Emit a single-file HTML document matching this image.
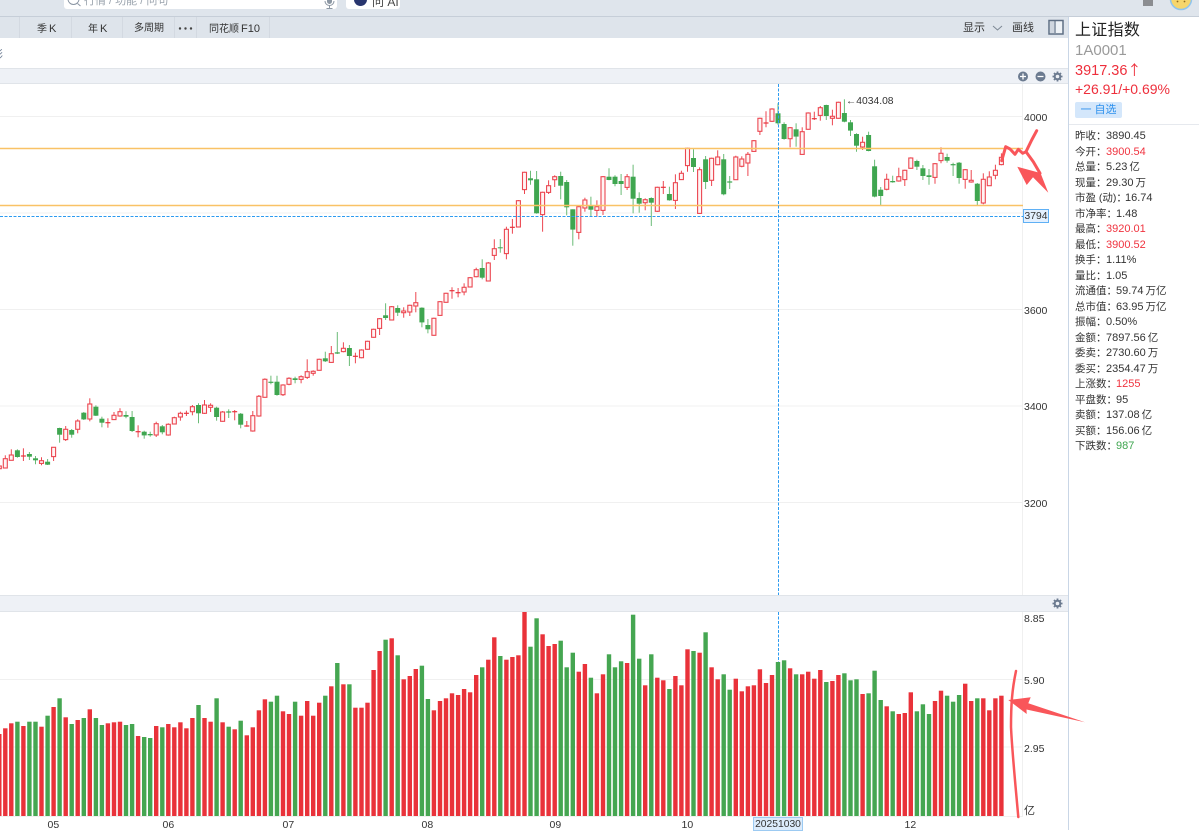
<!DOCTYPE html>
<html lang="zh">
<head>
<meta charset="utf-8">
<title>上证指数</title>
<style>
html,body{margin:0;padding:0;background:#fff}
body{width:1199px;height:830px;position:relative;overflow:hidden;font-family:"Liberation Sans","Noto Sans CJK SC",sans-serif;color:#333;font-size:10.5px;filter:blur(.3px)}
.a{position:absolute}
.t{position:absolute;white-space:nowrap;line-height:14px;height:14px}
.tb{font-size:10px;color:#333}
.tb i{font-style:normal;margin-left:2px;font-size:11px}
.s{position:absolute;left:1075px;white-space:nowrap;font-size:10.5px;line-height:14px;color:#333}
.s b{font-weight:normal;font-size:11px;position:absolute;top:0}
.s b i{font-style:normal;font-size:10.5px;margin-left:2px}
.r{color:#f0333f}
.g{color:#3fa650}
.v{position:absolute;background:#d3d9e1;width:1px;top:17px;height:21px}
svg{position:absolute;left:0;top:0}
</style>
</head>
<body>
<div class="a" style="left:0;top:0;width:1199px;height:16px;background:#dfe5ec"></div>
<div class="a" style="left:0;top:16px;width:1199px;height:1px;background:#c6ced8"></div>
<div class="a" style="left:0;top:17px;width:1068px;height:21px;background:#dee4eb"></div>

<div class="a" style="left:64px;top:-6px;width:273px;height:15px;background:#fff;border-radius:3px"></div>
<div class="t" style="left:84px;top:-6px;font-size:11px;color:#9aa3ad">行情 / 功能 / 问句</div>
<div class="a" style="left:346px;top:-6px;width:54px;height:15px;background:#fff;border-radius:3px"></div>
<div class="a" style="left:354px;top:-7px;width:13px;height:13px;background:#28356e;border-radius:50%"></div>
<div class="t" style="left:372px;top:-5px;font-size:12px;color:#444">问 AI</div>
<div class="a" style="left:1143px;top:0;width:10px;height:6px;background:#8b8d91"></div>

<div class="v" style="left:19px"></div><div class="v" style="left:71px"></div><div class="v" style="left:122px"></div><div class="v" style="left:174px"></div><div class="v" style="left:196px"></div><div class="v" style="left:269px"></div>
<div class="t tb" style="left:37px;top:22px">季<i>K</i></div>
<div class="t tb" style="left:88px;top:22px">年<i>K</i></div>
<div class="t tb" style="left:134px;top:22px">多周期</div>
<div class="t tb" style="left:209px;top:22px">同花顺<i>F10</i></div>
<div class="t" style="left:963px;top:21px;font-size:11px">显示</div>
<div class="t" style="left:1012px;top:21px;font-size:11px">画线</div>
<div class="t" style="left:-8px;top:48px;color:#6f7f95;font-size:11px">彩</div>

<div class="a" style="left:0;top:68px;width:1068px;height:16px;background:#eef1f6;border-top:1px solid #e0e4e9;border-bottom:1px solid #e0e4e9;box-sizing:border-box"></div>
<div class="a" style="left:0;top:595px;width:1068px;height:17px;background:#eef1f6;border-top:1px solid #e0e4e9;border-bottom:1px solid #e0e4e9;box-sizing:border-box"></div>
<div class="a" style="left:1068px;top:17px;width:1px;height:813px;background:#c9d6e6"></div>
<div class="a" style="left:1069px;top:124px;width:130px;height:1px;background:#e6e9ee"></div>

<svg id="ch" width="1199" height="830" viewBox="0 0 1199 830">
  <g stroke="#f0f0f0" stroke-width="1">
    <path d="M1022.5 84V595M1022.5 612V816"/>
    <path d="M0 116.5H1023M0 213H1023M0 309.5H1023M0 406H1023M0 502.5H1023M0 679.5H1023M0 747H1023M0 816.5H1023"/>
  </g>
  <g id="cn"></g>
  <path d="M0 148.5H1023M0 205.5H1023" stroke="#f9c266" stroke-width="1.4" fill="none"/>
  <path d="M0 216.5H1023M778.5 84V595M778.5 612V662" stroke="#2d9bf0" stroke-width="1" stroke-dasharray="3 1.5" fill="none"/>
  <g id="vb"></g>

  <!-- tab dots -->
  <g fill="#444"><circle cx="180" cy="28.5" r="1.2"/><circle cx="185.5" cy="28.5" r="1.2"/><circle cx="191" cy="28.5" r="1.2"/></g>
  <path d="M993 26L997.5 30L1002 26" stroke="#7d8894" fill="none" stroke-width="1"/>
  <rect x="1049" y="20.500" width="14" height="13.500" fill="#eef2f6" stroke="#5f6f84" stroke-width="1.5"/>
  <path d="M1055 21v12" stroke="#5f6f84" stroke-width="1.200"/>
  <rect x="1050" y="21.500" width="4.500" height="11.500" fill="#cfd6df"/>
  <!-- search + mic -->
  <circle cx="73.500" cy="-1" r="5.500" fill="none" stroke="#8a95a3" stroke-width="1"/>
  <path d="M77.500 3.500L80.500 6" stroke="#8a95a3" fill="none" stroke-width="1"/>
  <rect x="327" y="-3" width="5" height="7" rx="2.5" fill="#8c97a3"/>
  <path d="M325 1a4.500 4.500 0 0 0 9 0M329.500 6v2M326.500 8.500h6" stroke="#8c97a3" fill="none" stroke-width="1"/>
  <!-- avatar -->
  <ellipse cx="1181" cy="-1" rx="10.500" ry="10.500" fill="#f6d66c" stroke="#8fc4ee" stroke-width="1.500"/>
  <circle cx="1177.500" cy="1.500" r=".9" fill="#8c6a1f"/><circle cx="1184.500" cy="1.500" r=".9" fill="#8c6a1f"/>

  <!-- panel icons -->
  <g fill="#6c7b90">
    <circle cx="1023" cy="76.500" r="5"/><circle cx="1040.500" cy="76.500" r="5"/>
  </g>
  <path d="M1020 76.500h6M1023 73.500v6M1037.500 76.500h6" stroke="#fff" stroke-width="1.300"/>
  <g fill="none" stroke="#6c7b90">
    <circle cx="1057.500" cy="76.500" r="2.800" stroke-width="2"/>
    <path d="M1057.500 71.500v1.800M1057.500 79.700v1.800M1052.500 76.500h1.800M1060.700 76.500h1.800M1054 73l1.200 1.200M1059.800 78.800l1.200 1.200M1054 80l1.200-1.200M1059.800 74.200l1.200-1.200" stroke-width="1.800"/>
    <circle cx="1057.500" cy="603.500" r="2.800" stroke-width="2"/>
    <path d="M1057.500 598.500v1.800M1057.500 606.700v1.800M1052.500 603.500h1.800M1060.700 603.500h1.800M1054 600l1.200 1.200M1059.800 605.800l1.200 1.200M1054 607l1.200-1.200M1059.800 601.200l1.200-1.200" stroke-width="1.800"/>
  </g>

  <!-- hand annotations -->
  <g fill="none" stroke="#f9565a" stroke-linecap="round" stroke-linejoin="round">
    <path d="M1001.700 160.700L1005.700 146.700L1010 149L1015 154.300L1018.300 149.300L1022.700 153.300L1026 151.700L1031.700 140L1036.700 130.700" stroke-width="3"/>
    <path d="M1026 151.700L1033.300 161.700L1040 173.300" stroke-width="3"/>
    <path d="M1016 671C1012 690 1011 705 1011 727C1012 750 1015 780 1018.300 817" stroke-width="2.500"/>
  </g>
  <path d="M1017.300 166.700L1036.700 172L1040.500 173L1048.300 192.700L1033 177.300L1026.700 185Z" fill="#f9565a"/>
  <path d="M1008.300 700L1030.700 697.300L1028.300 703.300L1085 722.300L1026.500 709.500L1026.700 714Z" fill="#f9565a"/>
</svg>

<div class="t" style="left:846px;top:93.500px;font-size:10.3px;transform:translateY(1px)">←4034.08</div>
<div class="t" style="left:1024px;top:111px">4000</div>
<div class="t" style="left:1024px;top:304px">3600</div>
<div class="t" style="left:1024px;top:400px">3400</div>
<div class="t" style="left:1024px;top:497px">3200</div>
<div class="a" style="left:1023px;top:209px;width:26px;height:14px;background:#e3f0ff;border:1px solid #5fb0f5;box-sizing:border-box;line-height:13px;text-align:center;font-size:10.3px">3794</div>

<div class="t" style="left:1024px;top:612px">8.85</div>
<div class="t" style="left:1024px;top:674px">5.90</div>
<div class="t" style="left:1024px;top:742px">2.95</div>
<div class="t" style="left:1024px;top:804px;font-size:11px">亿</div>

<div class="t" style="left:47.500px;top:817.500px">05</div>
<div class="t" style="left:162.500px;top:817.500px">06</div>
<div class="t" style="left:282.500px;top:817.500px">07</div>
<div class="t" style="left:421.500px;top:817.500px">08</div>
<div class="t" style="left:549.500px;top:817.500px">09</div>
<div class="t" style="left:681.500px;top:817.500px">10</div>
<div class="t" style="left:904.500px;top:817.500px">12</div>
<div class="a" style="left:753px;top:817px;width:50px;height:14px;background:#dcebfb;border:1px solid #9ccaf2;box-sizing:border-box;line-height:13px;text-align:center;font-size:10.3px">20251030</div>

<div class="t" style="left:1075px;top:21px;height:20px;line-height:20px;font-size:16px;letter-spacing:.3px;color:#222">上证指数</div>
<div class="t" style="left:1075px;top:42px;height:18px;line-height:18px;font-size:15px;color:#9a9a9a">1A0001</div>
<div class="t" style="left:1075px;top:61px;height:18px;line-height:18px;font-size:14.500px;color:#ee2f3c">3917.36<span style="font-family:'Noto Sans CJK SC',sans-serif;font-size:14px">↑</span></div>
<div class="t" style="left:1075px;top:80px;height:18px;line-height:18px;font-size:14px;color:#ee2f3c">+26.91/+0.69%</div>
<div class="a" style="left:1075px;top:102px;width:47px;height:16px;background:#d4e7fb;border-radius:2px;color:#2f92ee;font-size:11px;line-height:16px;text-align:center">一 自选</div>

<div class="s" style="top:129px">昨收：<b style="left:31px">3890.45</b></div>
<div class="s" style="top:144.500px">今开：<b class="r" style="left:31px">3900.54</b></div>
<div class="s" style="top:160px">总量：<b style="left:31px">5.23<i>亿</i></b></div>
<div class="s" style="top:175.500px">现量：<b style="left:31px">29.30<i>万</i></b></div>
<div class="s" style="top:191px">市盈 (动)：<b style="left:50px">16.74</b></div>
<div class="s" style="top:206.500px">市净率：<b style="left:41px">1.48</b></div>
<div class="s" style="top:222px">最高：<b class="r" style="left:31px">3920.01</b></div>
<div class="s" style="top:237.500px">最低：<b class="r" style="left:31px">3900.52</b></div>
<div class="s" style="top:253px">换手：<b style="left:31px">1.11%</b></div>
<div class="s" style="top:268.500px">量比：<b style="left:31px">1.05</b></div>
<div class="s" style="top:284px">流通值：<b style="left:41px">59.74<i>万亿</i></b></div>
<div class="s" style="top:299.500px">总市值：<b style="left:41px">63.95<i>万亿</i></b></div>
<div class="s" style="top:315px">振幅：<b style="left:31px">0.50%</b></div>
<div class="s" style="top:330.500px">金额：<b style="left:31px">7897.56<i>亿</i></b></div>
<div class="s" style="top:346px">委卖：<b style="left:31px">2730.60<i>万</i></b></div>
<div class="s" style="top:361.500px">委买：<b style="left:31px">2354.47<i>万</i></b></div>
<div class="s" style="top:377px">上涨数：<b class="r" style="left:41px">1255</b></div>
<div class="s" style="top:392.500px">平盘数：<b style="left:41px">95</b></div>
<div class="s" style="top:408px">卖额：<b style="left:31px">137.08<i>亿</i></b></div>
<div class="s" style="top:423.500px">买额：<b style="left:31px">156.06<i>亿</i></b></div>
<div class="s" style="top:439px">下跌数：<b class="g" style="left:41px">987</b></div>

<script>
(function(){
var G=[2,4,5,7,9,11,13,15,16,20,21,23,24,26,32,35,37,39,44,45,48,53,55,57,63,65,69,70,79,82,87,88,92,93,94,97,100,101,102,104,105,107,110,114,116,119,120,128,129,131,136,139,140,141,143,144,145,147,151,152,153,156,157,158,161];
var isG={};G.forEach(function(i){isG[i]=1});
var V=[432,415,400,395,408,395,395,410,377,351,325,382,402,390,384,358,384,405,400,397,395,405,402,438,441,444,408,412,402,412,397,415,384,345,384,395,325,397,410,418,392,436,412,361,328,335,317,364,372,335,377,333,377,338,317,289,219,283,283,
353,353,338,240,183,149,145,196,268,258,237,227,327,361,333,325,310,315,297,307,255,232,209,142,198,209,201,196,66,170,85,133,168,162,152,232,188,245,222,263,310,253,193,232,214,219,74,206,286,193,263,271,297,258,286,178,183,188,
127,232,268,253,299,266,304,289,286,238,279,255,216,211,235,253,253,245,266,240,276,273,255,250,271,268,312,310,242,330,349,364,372,369,307,364,343,372,333,302,317,335,315,281,333,325,325,361,325,317];
var A=[[258,266,258,266],[236,264,226,264],[225,241,208,241],[211,231,208,233],[228,228,205,243],[222,230,216,240],[235,241,228,253],[242,250,232,256],[245,254,237,255],[202,230,201,243],[144,164,143,188],[148,179,138,183],[150,164,147,173],[123,148,118,160],[98,118,96,120],[72,117,55,124],[80,107,76,108],[116,128,110,142],[128,128,115,143],[106,119,96,119],[95,108,85,110],[105,110,94,115],[111,153,93,156],[155,155,136,172],[155,166,152,176],[162,166,155,170],[131,165,125,171],[139,157,135,163],[133,165,130,167],[113,132,110,133],[100,111,95,122],[100,100,92,108],[80,95,75,106],[75,100,70,130],[75,100,60,102],[76,82,70,96],[83,111,80,122],[96,124,93,125],[96,96,88,114],[95,95,90,121],[101,134,99,145],[138,138,123,140],[107,153,93,155],[49,108,45,110]];
var B=[[448,502,445,503],[457,457,437,463],[455,495,437,497],[465,494,463,498],[445,463,442,466],[445,450,440,460],[440,448,436,460],[425,442,388,447],[424,430,421,437],[388,421,386,422],[385,394,365,396],[371,397,348,398],[367,371,306,372],[355,365,337,367],[354,378,345,408],[379,379,368,400],[360,383,358,385],[334,358,332,359],[298,322,296,323],[266,295,264,315],[256,264,220,270],[230,270,228,271],[234,248,226,258],[243,248,232,263],[226,246,224,258],[218,228,186,247],[233,277,232,292],[285,298,267,310],[265,316,263,317],[215,256,213,257],[190,217,188,218],[182,182,172,206],[188,188,174,202],[172,186,160,196],[143,171,141,172],[119,140,113,142],[114,143,88,148],[99,153,96,154],[56,76,28,90],[52,55,27,68]];
var C=[[418,491,410,508],[412,412,387,431],[332,411,330,412],[247,299,245,312],[265,271,242,284],[268,370,243,371],[307,374,305,425],[287,307,271,312],[260,269,256,291],[258,287,245,328],[276,352,270,376],[358,419,358,467],[350,427,347,448],[330,354,323,365],[347,359,320,381],[350,361,331,380],[260,361,258,375],[260,270,235,271],[260,282,256,289],[273,282,252,315],[260,292,252,300],[260,326,224,370],[324,341,307,368],[329,338,325,361],[324,338,322,408],[292,364,290,366],[292,292,273,312],[312,331,290,332],[278,331,253,357],[250,269,242,270],[175,227,173,245],[204,231,178,246],[239,370,232,371],[208,276,198,297],[205,271,203,288],[201,224,181,226],[208,313,192,316],[276,276,258,297],[201,269,197,270],[207,229,199,232],[193,219,186,258],[152,184,150,185],[85,124,83,135],[99,99,64,112],[57,94,55,96],
[70,100,40,104],[102,147,97,149],[113,146,111,172],[118,140,100,170],[125,193,112,194],[69,118,67,119],[86,86,65,90],[53,76,48,92],[45,78,44,90],[79,85,59,106],[37,85,35,86],[69,95,28,97],[97,122,90,138],[132,167,130,185],[157,171,140,180],[135,183,125,184],[229,320,209,322],[299,318,291,345],[268,298,251,301],[273,277,257,278],[260,273,233,275],[241,269,239,288],[204,235,202,236],[213,230,209,240],[235,258,225,270],[256,261,237,284],[221,262,219,281],[190,212,172,220],[201,212,191,218],[224,224,218,258],[218,264,216,281],[239,268,237,296],[271,276,240,278],[281,333,279,345],[268,339,250,343],[261,287,244,288],[241,256,224,268],[202,224,190,226]];
function xi(i){return 5.3+6.037*i}
function f(n){return n.toFixed(1)}
var cs='',i,d,y0,x,t,b,h,l,g;
var all=[];
A.forEach(function(d,k){all.push([k-1,380,d])});
B.forEach(function(d,k){all.push([k+43,230,d])});
C.forEach(function(d,k){all.push([k+83,90,d])});
all.forEach(function(e){
 i=e[0];y0=e[1];d=e[2];x=xi(i);g=isG[i];
 t=y0+d[0]/3;b=y0+d[1]/3;h=y0+d[2]/3;l=y0+d[3]/3;
 if(g){
  cs+='<path d="M'+f(x)+' '+f(h)+'V'+f(l)+'" stroke="#6abb76" stroke-width="1"/>';
  if(b-t<1){cs+='<path d="M'+f(x-2.5)+' '+f(t)+'H'+f(x+2.5)+'" stroke="#3fa650" stroke-width="1.2"/>';}
  else cs+='<rect x="'+f(x-2.5)+'" y="'+f(t)+'" width="5" height="'+f(b-t)+'" fill="#3fa650"/>';
 }else{
  cs+='<path d="M'+f(x)+' '+f(h)+'V'+f(l)+'" stroke="#ec4650" stroke-width="1"/>';
  if(b-t<1){cs+='<path d="M'+f(x-2.5)+' '+f(t)+'H'+f(x+2.5)+'" stroke="#e8323c" stroke-width="1.2"/>';}
  else cs+='<rect x="'+f(x-2)+'" y="'+f(t)+'" width="4" height="'+f(b-t)+'" fill="#fff4f4" stroke="#ec4650" stroke-width="1.1"/>';
 }
});
document.getElementById('cn').innerHTML=cs;
var vs='';
V.forEach(function(z,k){
 var n=k-1,yy=590+z/3,xx=xi(n);
 vs+='<rect x="'+f(xx-2.2)+'" y="'+f(yy)+'" width="4.4" height="'+f(816-yy)+'" fill="'+(isG[n]?'#45a651':'#e9323a')+'"/>';
});
document.getElementById('vb').innerHTML=vs;
})();
</script>
</body>
</html>
